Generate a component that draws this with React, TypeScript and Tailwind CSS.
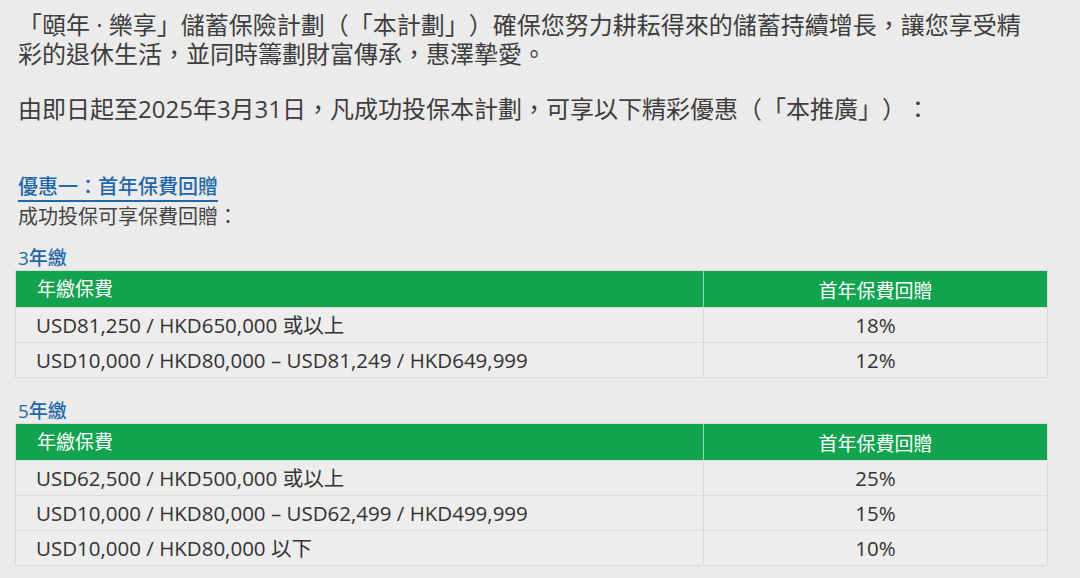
const FONT = "font-['Open_Sans','Noto_Sans_CJK_TC',sans-serif]";

type Row = { range: string; rate: string };

const threeYear: Row[] = [
  { range: "USD81,250 / HKD650,000 或以上", rate: "18%" },
  { range: "USD10,000 / HKD80,000 – USD81,249 / HKD649,999", rate: "12%" },
];

const fiveYear: Row[] = [
  { range: "USD62,500 / HKD500,000 或以上", rate: "25%" },
  { range: "USD10,000 / HKD80,000 – USD62,499 / HKD499,999", rate: "15%" },
  { range: "USD10,000 / HKD80,000 以下", rate: "10%" },
];

function RebateTable({ label, rows }: { label: string; rows: Row[] }) {
  return (
    <div>
      <div className="text-[19px] leading-[22px] text-[#2268a6] font-medium pl-[3px]">{label}</div>
      <div className="w-[1033px] mt-[1px] border border-[#dadada]">
        <div className="grid grid-cols-[688px_1fr] bg-[#12a34f] text-white text-[19px]">
          <div className="h-[36px] flex items-center pl-[21px] border-r border-[#8fdcae]">年繳保費</div>
          <div className="h-[36px] flex items-center justify-center pt-[5px]">首年保費回贈</div>
        </div>
        {rows.map((r, i) => (
          <div
            key={i}
            className="grid grid-cols-[688px_1fr] text-[20.5px] text-[#333] border-t border-[#dcdcdc] bg-[#ededed]"
          >
            <div className="h-[34px] flex items-center pl-[20px] border-r border-[#dcdcdc]">{r.range}</div>
            <div className="h-[34px] flex items-center justify-center">{r.rate}</div>
          </div>
        ))}
      </div>
    </div>
  );
}

export default function App() {
  return (
    <div
      lang="zh-TW"
      className={`${FONT} [text-spacing-trim:space-all] w-[1080px] h-[578px] overflow-hidden bg-[#ebebeb] text-[#3d3d3d] pl-[15px]`}
    >
      <p className="w-[1022px] pl-[3px] pt-[10px] text-[24px] leading-[29px]">
        「頤年 · 樂享」儲蓄保險計劃（「本計劃」）確保您努力耕耘得來的儲蓄持續增長，讓您享受精彩的退休生活，並同時籌劃財富傳承，惠澤摯愛。
      </p>
      <p className="pl-[3px] mt-[26px] text-[24px] leading-[29px]">
        由即日起至2025年3月31日，凡成功投保本計劃，可享以下精彩優惠（「本推廣」）：
      </p>
      <div className="pl-[3px] mt-[52px]">
        <span className="inline-block text-[20px] leading-[24px] text-[#2268a6] font-medium border-b-2 border-[#2268a6] pb-[1px]">
          優惠一：首年保費回贈
        </span>
      </div>
      <div className="pl-[3px] text-[20px] leading-[30px] text-[#444]">成功投保可享保費回贈：</div>
      <div className="mt-[15px]">
        <RebateTable label="3年繳" rows={threeYear} />
      </div>
      <div className="mt-[22px]">
        <RebateTable label="5年繳" rows={fiveYear} />
      </div>
    </div>
  );
}
